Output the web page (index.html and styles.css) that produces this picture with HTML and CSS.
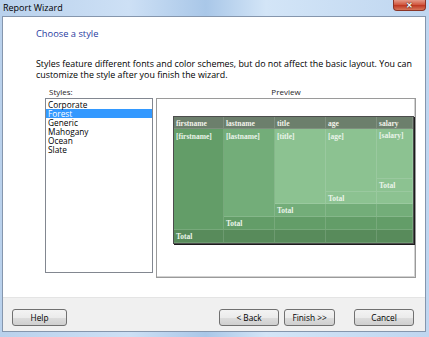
FILE: index.html
```html
<!DOCTYPE html>
<html lang="en">
<head>
    <meta charset="UTF-8">
    <title>Report Wizard</title>
    <link rel="stylesheet" href="styles.css">
</head>
<body>
    <div class="titlebar">
        <span class="title">Report Wizard</span>
        <span class="close">&#x2715;</span>
    </div>
    <div class="client">
        <div class="content">
            <h2 class="heading">Choose a style</h2>
            <p class="intro">Styles feature different fonts and color schemes, but do not affect the basic layout. You can<br>customize the style after you finish the wizard.</p>
            <div class="panes">
                <div class="styles-pane">
                    <label class="pane-label">Styles:</label>
                    <ul class="listbox">
                        <li>Corporate</li>
                        <li class="selected">Forest</li>
                        <li>Generic</li>
                        <li>Mahogany</li>
                        <li>Ocean</li>
                        <li>Slate</li>
                    </ul>
                </div>
                <div class="preview-pane">
                    <div class="pane-label preview-label">Preview</div>
                    <div class="preview">
                        <div class="report">
                            <div class="cell head">firstname</div>
                            <div class="cell head">lastname</div>
                            <div class="cell head">title</div>
                            <div class="cell head">age</div>
                            <div class="cell head">salary</div>

                            <div class="cell l2 span5">[firstname]</div>
                            <div class="cell l3 span4">[lastname]</div>
                            <div class="cell l4 span3">[title]</div>
                            <div class="cell l4 span2">[age]</div>
                            <div class="cell l4">[salary]</div>

                            <div class="cell l4">Total</div>

                            <div class="cell l4">Total</div>
                            <div class="cell l4"></div>

                            <div class="cell l3">Total</div>
                            <div class="cell l3"></div>
                            <div class="cell l3"></div>

                            <div class="cell l2">Total</div>
                            <div class="cell l2"></div>
                            <div class="cell l2"></div>
                            <div class="cell l2"></div>

                            <div class="cell l1">Total</div>
                            <div class="cell l1"></div>
                            <div class="cell l1"></div>
                            <div class="cell l1"></div>
                            <div class="cell l1"></div>
                        </div>
                    </div>
                </div>
            </div>
        </div>
        <div class="footer">
            <button class="btn help">Help</button>
            <div class="nav">
                <button class="btn back">&lt; Back</button>
                <button class="btn finish">Finish &gt;&gt;</button>
                <button class="btn cancel">Cancel</button>
            </div>
        </div>
    </div>
</body>
</html>
```

FILE: styles.css
```css
* {
    box-sizing: border-box;
}
html, body {
    margin: 0;
    width: 429px;
    height: 337px;
    overflow: hidden;
}
body {
    font-family: 'Open Sans', sans-serif;
    font-size: 8px;
    color: #000;
    background: linear-gradient(to right, #b9d1ec, #cde0f5 30%, #a9c7e8 48%, #d3e5f7 62%, #bfd6f0);
}
.titlebar {
    height: 16px;
    display: flex;
    align-items: flex-start;
    justify-content: space-between;
}
.title {
    margin: 2px 0 0 3px;
    font-size: 9px;
    line-height: 11px;
}
.close {
    width: 33px;
    height: 11px;
    margin-right: 3px;
    border: 1px solid #8a3426;
    border-top: none;
    border-radius: 0 0 4px 4px;
    background: linear-gradient(#e59a88, #d25a42 45%, #bf3a24 55%, #d8775a);
    color: #fff;
    font-size: 8px;
    font-weight: bold;
    line-height: 10px;
    text-align: center;
    text-shadow: 0 0 1px #3a1a10, 0 0 1px #3a1a10;
}
.client {
    height: 316px;
    margin: 0 3px 0 2px;
    border: 1px solid #8596ad;
    display: flex;
    flex-direction: column;
}
.content {
    height: 280px;
    background: #fff;
    padding: 10px 0 0 33px;
}
.heading {
    margin: 0;
    font-size: 9.3px;
    font-weight: normal;
    line-height: 14px;
    color: #1f3aa0;
}
.intro {
    margin: 17px 0 0;
    font-size: 8.9px;
    line-height: 11px;
    white-space: nowrap;
}
.panes {
    display: flex;
    gap: 3px;
    margin: 6px 0 0 9px;
}
.styles-pane {
    width: 108px;
}
.pane-label {
    display: block;
    height: 12px;
    line-height: 11px;
    padding-left: 4px;
    color: #1e1e1e;
}
.listbox {
    list-style: none;
    margin: 0;
    padding: 0;
    height: 175px;
    border: 1px solid #828790;
    font-size: 8.3px;
}
.listbox li {
    height: 9px;
    line-height: 9px;
    padding-left: 2px;
}
.listbox li:first-child {
    margin-top: 1px;
}
.listbox .selected {
    background: #3399ff;
    color: #fff;
}
.preview-pane {
    width: 260px;
}
.preview-label {
    text-align: center;
    padding-left: 0;
}
.preview {
    height: 180px;
    border: 1px solid #9a9a9a;
    box-shadow: inset -1px -1px 0 #d2d2d2;
    padding: 17px 0 0 16px;
    overflow: hidden;
}
.report {
    display: grid;
    grid-template-columns: 50px 51px 51px 51px 36px;
    grid-template-rows: 12px 50px 13px 12px 13px 13px 13px;
    width: 241px;
    border: 1px solid #4d4d4d;
    box-shadow: 1px 1px 0 #1c1c1c;
    font-family: 'Liberation Serif', serif;
    font-size: 7.5px;
    font-weight: bold;
}
.cell {
    padding: 2px 2px 0;
    line-height: 9px;
    color: #eaf4ea;
    border-right: 1px solid rgba(255, 255, 255, 0.13);
    border-bottom: 1px solid rgba(255, 255, 255, 0.13);
    white-space: nowrap;
    overflow: hidden;
}
.head {
    background: #6c7f6c;
    color: #f2f2ea;
    padding-top: 2px;
}
.span5, .span4, .span3, .span2, .head + .l4 {
    padding-top: 3px;
}
.l1 { background: #588b5b; }
.l2 { background: #639d68; }
.l3 { background: #73ad79; }
.l4 { background: #8cc291; }
.span5 { grid-row: span 5; }
.span4 { grid-row: span 4; }
.span3 { grid-row: span 3; }
.span2 { grid-row: span 2; }
.footer {
    flex: 1;
    background: #f0f0f0;
    border-top: 1px solid #e4e4e4;
    display: flex;
    justify-content: space-between;
    align-items: flex-start;
    padding: 11px 11px 0 9px;
}
.nav {
    display: flex;
}
.btn {
    height: 17px;
    padding: 0;
    border: 1px solid #707070;
    border-radius: 3px;
    background: linear-gradient(#f3f3f3, #ebebeb 50%, #dddddd 50%, #cfcfcf);
    font-family: 'Open Sans', sans-serif;
    font-size: 8.3px;
    color: #000;
}
.help { width: 55px; }
.back { width: 60px; }
.finish { width: 51px; margin-left: 5px; }
.cancel { width: 60px; margin-left: 19px; }
```
